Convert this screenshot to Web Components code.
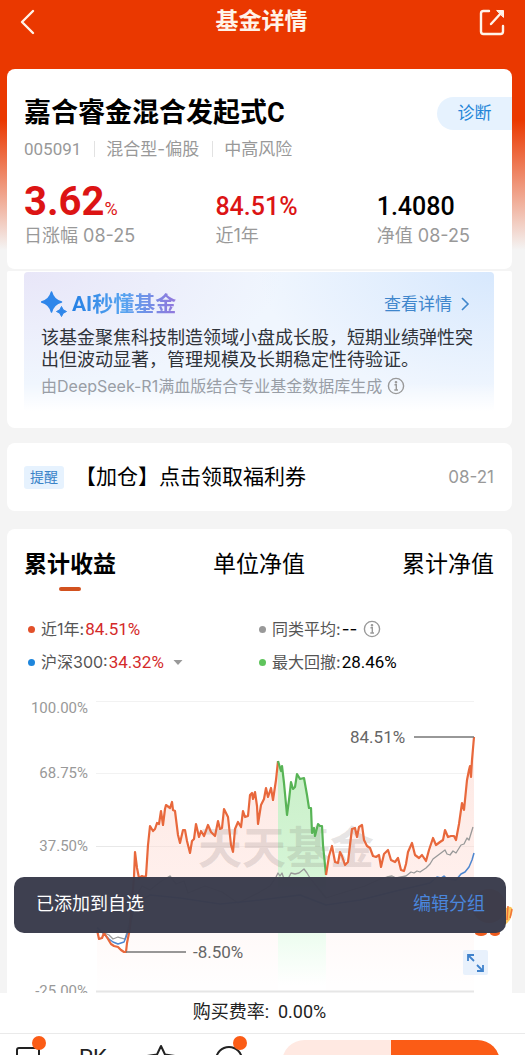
<!DOCTYPE html>
<html lang="zh-CN">
<head>
<meta charset="utf-8">
<meta name="viewport" content="width=device-width, initial-scale=1">
<title>基金详情</title>
<style>
  html, body { margin: 0; }
  body {
    --wide: Inter, "Noto Sans CJK SC", sans-serif;
    font-family: Roboto, "Noto Sans CJK SC", sans-serif;
    color: #000;
    background: #f4f4f4;
  }
</style>
</head>
<body>
<fund-app>
  <nav-bar slot="nav">基金详情</nav-bar>
  <fund-summary></fund-summary>
  <ai-brief></ai-brief>
  <notice-row date="08-21">【加仓】点击领取福利券</notice-row>
  <chart-card></chart-card>
  <snack-toast slot="toast" action="编辑分组">已添加到自选</snack-toast>
  <bottom-bar slot="footer"></bottom-bar>
</fund-app>

<script>
const reset = `<style>
  *, *::before, *::after { box-sizing: border-box; }
  :host { display: block; }
  button { font: inherit; color: inherit; background: none; border: 0; padding: 0; margin: 0; cursor: pointer; }
  a { color: inherit; text-decoration: none; }
  h1, h2, p, dl, dd, dt { margin: 0; font-weight: 400; }
  svg { display: block; }
</style>`;

function define(name, build) {
  customElements.define(name, class extends HTMLElement {
    constructor() {
      super();
      this.attachShadow({ mode: 'open' });
    }
    connectedCallback() {
      const t = document.createElement('template');
      t.innerHTML = reset + build(this);
      this.shadowRoot.replaceChildren(t.content.cloneNode(true));
    }
  });
}

define('fund-app', () => `
<style>
  :host {
    display: flex; flex-direction: column; position: relative;
    height: 100vh; overflow: hidden;
    background: linear-gradient(#ea3800 0, #ea3800 120px, #f4f4f4 250px);
  }
  main { flex: 1; min-height: 0; overflow: hidden; padding: 0 13px 0 7px; }
  .toast { position: absolute; left: 14px; right: 19px; bottom: 122px; }
</style>
<slot name="nav"></slot>
<main><slot></slot></main>
<slot name="footer"></slot>
<div class="toast"><slot name="toast"></slot></div>`);

define('nav-bar', () => `
<style>
  header { display: grid; grid-template-columns: 40px 1fr 40px; align-items: center; height: 69px; padding: 0 18px 25px 16px; color: #fff3e8; }
  h1 { text-align: center; font-size: 23px; line-height: 34px; font-weight: 700; }
  button { width: 30px; height: 30px; }
  button:last-child { justify-self: end; }
</style>
<header>
  <button aria-label="返回"><svg width="30" height="30" viewBox="0 0 30 30" fill="none" stroke="currentColor" stroke-width="2.4" stroke-linecap="round" stroke-linejoin="round"><path d="M17 4 6 15 17 26"/></svg></button>
  <h1><slot></slot></h1>
  <button aria-label="分享"><svg width="30" height="30" viewBox="0 0 30 30" fill="none" stroke="currentColor" stroke-width="2.4" stroke-linecap="round" stroke-linejoin="round"><path d="M12 4H6.500Q4 4 4 6.500V24.500Q4 27 6.500 27H23.500Q26 27 26 24.500V19"/><path d="M14 17 25 5"/><path d="M20 3.500H26.500V10Z" fill="currentColor" stroke-width="1"/></svg></button>
</header>`);

define('info-icon', () => `
<style>
  :host { display: inline-block; color: #999; }
</style>
<svg width="18" height="18" viewBox="0 0 18 18" fill="none" stroke="currentColor" stroke-width="1.4" role="img" aria-label="说明"><circle cx="9" cy="9" r="7.600"/><path d="M7.500 7.800H9.300V13M7.300 13H11"/><circle cx="9" cy="5.200" r=".6" fill="currentColor"/></svg>`);

define('fund-summary', () => `
<style>
  section { background: #fff; border-radius: 8px; padding: 24px 0 23px 17px; border-bottom: 1px solid #f4f4f4; }
  .head { display: flex; justify-content: space-between; align-items: center; }
  h2 { font-size: 27px; line-height: 40px; font-weight: 700; }
  .diag { width: 75px; height: 33px; border-radius: 17px 0 0 17px; background: #e6f2fe; color: #2385d8; font-size: 17px; line-height: 33px; }
  .meta { display: flex; align-items: center; margin-top: 4px; color: #999; font-size: 17px; line-height: 24px; }
  .meta span + span { position: relative; margin-left: 13px; padding-left: 12px; font-family: var(--wide); }
  .meta span + span::before { content: ""; position: absolute; left: 0; top: 4px; height: 16px; border-left: 1px solid #e2e2e2; }
  .stats { display: grid; grid-template-columns: 191fr 161fr 135fr; align-items: baseline; margin-top: 17px; }
  .v { font-size: 25px; line-height: 24px; font-weight: 500; }
  .big { font-size: 40px; line-height: 48px; font-weight: 700; }
  .big small { font-size: 18px; line-height: 18px; font-weight: 400; }
  .red { color: #dc1414; }
  .l { color: #999; font-family: var(--wide); font-size: 18px; line-height: 20px; }
</style>
<section>
  <div class="head"><h2>嘉合睿金混合发起式C</h2><button class="diag">诊断</button></div>
  <p class="meta"><span>005091</span><span>混合型-偏股</span><span>中高风险</span></p>
  <div class="stats">
    <div class="v big red">3.62<small>%</small></div><div class="v red">84.51%</div><div class="v">1.4080</div>
    <div class="l">日涨幅 08-25</div><div class="l">近1年</div><div class="l">净值 08-25</div>
  </div>
</section>`);

define('ai-brief', () => `
<style>
  section { background: #fff; border-radius: 2px 2px 8px 8px; padding: 1px 18px 17px 17px; margin-top: 1px; }
  .panel {
    border-radius: 4px; padding: 18px 17px 14px;
    background: linear-gradient(transparent 80%, #fff 100%),
      radial-gradient(ellipse 50% 90% at 100% 0, #d7e8fd, transparent),
      radial-gradient(ellipse 55% 80% at 0 0, #e8e6f8, transparent), #f0f6fe;
  }
  .head { display: flex; align-items: center; justify-content: space-between; }
  h2 { display: flex; align-items: center; gap: 5px; font-size: 21px; line-height: 28px; font-weight: 700; }
  h2 span { background: linear-gradient(90deg, #2580e4, #57a4f0 50%, #9277dc); -webkit-background-clip: text; background-clip: text; color: transparent; }
  a { display: flex; align-items: center; gap: 8px; margin-right: 7px; font-size: 17px; line-height: 24px; color: #3f86cc; }
  .text { margin-top: 9px; margin-right: -8px; font-size: 18px; line-height: 22px; color: #2f333a; }
  .src { display: flex; align-items: center; gap: 5px; margin-top: 4px; font: 16px/22px var(--wide); color: #999ea6; }
</style>
<section><div class="panel">
  <div class="head">
    <h2><svg width="26" height="26" viewBox="0 0 26 26" fill="#2f86ea"><path d="M10.500 1Q12.500 9 20.500 11Q12.500 13 10.500 21Q8.500 13 .500 11Q8.500 9 10.500 1Z" stroke="#2f86ea" stroke-width="1.500" stroke-linejoin="round"/><path d="M20.500 15.500Q21.500 19.500 25.500 20.500Q21.500 21.500 20.500 25.500Q19.500 21.500 15.500 20.500Q19.500 19.500 20.500 15.500Z" stroke="#2f86ea"/></svg><span>AI秒懂基金</span></h2>
    <a href="#detail">查看详情<svg width="10" height="14" viewBox="0 0 10 14" fill="none" stroke="currentColor" stroke-width="1.600"><path d="M2 1 8 7 2 13"/></svg></a>
  </div>
  <p class="text">该基金聚焦科技制造领域小盘成长股，短期业绩弹性突出但波动显著，管理规模及长期稳定性待验证。</p>
  <p class="src">由DeepSeek-R1满血版结合专业基金数据库生成<info-icon></info-icon></p>
</div></section>`);

define('notice-row', el => `
<style>
  section { display: flex; align-items: center; height: 68px; margin-top: 15px; padding: 0 18px 0 17px; background: #fff; border-radius: 8px; }
  .tag { padding: 0 6px; border-radius: 3px; background: #e6f2fe; color: #3a83c8; font-size: 14px; line-height: 23px; }
  .txt { flex: 1; margin-left: 11px; font-size: 21px; line-height: 30px; }
  time { color: #999; font-family: var(--wide); font-size: 17px; }
</style>
<section><span class="tag">提醒</span><span class="txt"><slot></slot></span><time>${el.getAttribute('date')}</time></section>`);

const rise = '97,930 99,939 102,938 104,933 108,939 111,944 114,946 118,947 121,950 124,952 126,952 127,943 130,928 132,900 134,877 135,852 137,868 139,878 142,876 144,877 146,876 148,845 150,826 153,831 155,829 157,823 159,824 161,811 163,825 165,809 166,805 170,808 172,802 173,810 175,811 178,835 180,843 183,830 185,830 187,841 190,853 192,841 194,839 196,824 199,837 201,831 204,836 208,825 211,832 215,836 218,821 220,829 222,828 224,809 228,817 231,845 233,852 235,829 238,822 241,827 243,811 245,817 248,816 250,795 252,793 253,799 255,792 257,806 258,824 261,805 264,799 266,788 268,797 271,788 273,800 276,780 278,761';
const fall = '278,761 281,771 282,766 284,783 287,815 289,800 291,782 293,789 295,787 297,774 300,779 304,778 307,795 309,808 311,808 312,833 314,828 315,836 317,828 318,824 320,826 322,826 323,845 326,875';
const rebound = '326,875 329,856 332,846 335,862 338,863 340,852 342,856 345,865 348,862 350,845 352,829 355,828 357,837 359,827 362,825 364,840 367,846 370,848 373,856 376,857 379,855 381,867 384,854 388,850 391,860 395,862 398,858 401,870 404,871 406,864 408,852 412,843 415,855 419,858 422,855 426,861 429,850 433,838 436,845 440,842 443,840 445,830 448,837 451,836 454,836 456,840 459,824 462,803 464,810 467,780 469,770 470,766 471,777 472,760 474,737';

define('chart-card', () => `
<style>
  section { margin-top: 18px; padding: 20px 18px 20px 17px; background: #fff; border-radius: 8px; }
  .tabs { display: flex; justify-content: space-between; }
  .tabs button { font-size: 23px; line-height: 32px; padding-bottom: 10px; position: relative; }
  .tabs [aria-selected=true] { font-weight: 700; }
  .tabs [aria-selected=true]::after { content: ""; position: absolute; left: 50%; bottom: 0; width: 22px; height: 4px; margin-left: -11px; border-radius: 2px; background: #d2521f; }
  .legend { display: grid; grid-template-columns: 1fr 1fr; row-gap: 9px; margin-top: 26px; padding: 0 4px; font-size: 16px; line-height: 24px; color: #555; }
  .legend div { display: flex; align-items: center; }
  .legend i { width: 7px; height: 7px; border-radius: 50%; background: var(--dot); margin-right: 6px; }
  dt { font-family: var(--wide); }
  dd { color: #000; font-size: 17px; margin-left: 1px; }
  dd.none { font-family: var(--wide); }
  dd.red { color: #d42a2a; }
  info-icon { margin-left: 6px; height: 18px; }
  .more { margin-left: 8px; width: 12px; height: 12px; }
  .plot { position: relative; margin-top: 22px; }
  .plot > svg { width: 100%; height: auto; }
  .axis { font-size: 15px; fill: #999; text-anchor: end; }
  .mark { font-size: 17px; fill: #666; }
  .expand { position: absolute; right: 6px; top: 254px; width: 25px; height: 25px; border-radius: 2px; background: #e8f1fc; }
</style>
<section>
  <div class="tabs" role="tablist">
    <button role="tab" aria-selected="true">累计收益</button><button role="tab" aria-selected="false">单位净值</button><button role="tab" aria-selected="false">累计净值</button>
  </div>
  <dl class="legend">
    <div><i style="--dot:#e2502a"></i><dt>近1年:</dt><dd class="red">84.51%</dd></div>
    <div><i style="--dot:#999"></i><dt>同类平均:</dt><dd class="none">--</dd><info-icon></info-icon></div>
    <div><i style="--dot:#1e86dc"></i><dt>沪深300:</dt><dd class="red">34.32%</dd><button class="more" aria-label="切换指数"><svg width="12" height="12" viewBox="0 0 12 12" fill="#999"><path d="M1.500 4H10.500L6 9Z"/></svg></button></div>
    <div><i style="--dot:#5fc45c"></i><dt>最大回撤:</dt><dd>28.46%</dd></div>
  </dl>
  <div class="plot">
    <svg viewBox="24 696 470 304">
      <defs>
        <linearGradient id="warm" gradientUnits="userSpaceOnUse" x1="0" y1="740" x2="0" y2="985"><stop offset="0" stop-color="#fde8e3"/><stop offset=".6" stop-color="#fff0ed"/><stop offset=".8" stop-color="#fffaf9"/><stop offset="1" stop-color="#fffefe"/></linearGradient>
        <linearGradient id="cool" gradientUnits="userSpaceOnUse" x1="0" y1="760" x2="0" y2="985"><stop offset="0" stop-color="#c9efc8"/><stop offset=".5" stop-color="#d5f5d6"/><stop offset=".8" stop-color="#effdf1"/><stop offset="1" stop-color="#fff"/></linearGradient>
      </defs>
      <path d="M96 701.500H474M96 773.500H474M96 846.500H474M96 918.500H474" stroke="#f2f2f2"/>
      <polygon fill="url(#warm)" points="97,990 ${rise} 278,990"/>
      <polygon fill="url(#cool)" points="278,990 ${fall} 326,990"/>
      <polygon fill="url(#warm)" points="326,990 ${rebound} 474,990"/>
      <path d="M96 846.500H474" stroke="#000" stroke-opacity=".04"/>
      <path d="M96 991.500H474" stroke="#e6e6e6" stroke-width="2"/>
      <text x="198" y="864" font-family="Noto Sans CJK SC" font-size="44" font-weight="700" fill="#6a5a5a" fill-opacity=".17">天天基金</text>
      <g fill="none" stroke-linejoin="round">
        <polyline stroke="#999" stroke-width="1.300" points="97,927 102,932 109,935 113,939 118,937 125,939 129,925 134,900 142,886 150,890 160,882 170,876 176,884 184,881 188,893 205,886 222,892 238,903 258,893 270,886 276,877 278,873 280,876 282,873 284,879 288,879 291,873 295,874 299,873 304,869 307,873 310,878 318,888 326,898 345,892 365,886 380,879 387,877 392,876 396,878 406,876 411,872 414,873 417,871 420,872 426,868 430,864 433,859 437,856 441,853 445,850 447,854 450,855 453,851 456,853 461,845 464,844 467,838 469,840 473,827"/>
        <polyline stroke="#4d86cf" stroke-width="1.500" points="97,928 104,934 109,939 113,942 118,944 124,942 129,930 135,904 150,895 180,898 220,904 260,900 300,895 326,905 360,900 400,890 430,883 437,877 441,878 444,876 447,879 456,880 461,874 465,872 469,867 472,860 474,853"/>
        <g stroke-width="2.200"><polyline stroke="#e8683c" points="${rise}"/><polyline stroke="#58b456" points="${fall}"/><polyline stroke="#e8683c" points="${rebound}"/></g>
        <path d="M414 737H474M126 952H186" stroke="#777" stroke-width="1.500"/>
      </g>
      <g class="axis"><text x="88" y="713">100.00%</text><text x="88" y="778">68.75%</text><text x="88" y="851">37.50%</text><text x="88" y="996">-25.00%</text></g>
      <g class="mark"><text x="350" y="743">84.51%</text><text x="193" y="958">-8.50%</text></g>
    </svg>
    <button class="expand" aria-label="全屏"><svg width="25" height="25" viewBox="0 0 25 25" fill="none" stroke="#3f82cc" stroke-width="1.800"><path d="M5 11V5H11M5 5 11 11M20 15V21H14M20 21 14 15"/></svg></button>
  </div>
</section>`);

define('snack-toast', el => `
<style>
  :host { position: relative; }
  .pal { position: absolute; right: -7px; top: 5px; }
  .bar { position: relative; display: flex; justify-content: space-between; align-items: center; height: 56px; padding: 0 21px 2px 22px; border-radius: 10px; background: rgba(57, 59, 76, .975); color: #fff; font-size: 18px; line-height: 26px; }
  button { color: #4a86dc; }
</style>
<svg class="pal" width="44" height="56" viewBox="0 0 44 56"><circle cx="20" cy="24" r="17" fill="#f0743a"/><path d="M37 26Q45 22 43 32Q41 41 34 44Z" fill="#ffc75c"/><path d="M39 24 38 38M43 27 41 36" stroke="#f0743a" stroke-width="1.500"/><ellipse cx="12" cy="51" rx="6" ry="3" fill="#ef5b1c"/><ellipse cx="26" cy="51" rx="5" ry="3" fill="#ef5b1c"/></svg>
<div class="bar" role="status"><span><slot></slot></span><button>${el.getAttribute('action')}</button></div>`);

define('bottom-bar', () => `
<style>
  :host { background: #fff; }
  .fee { height: 41px; border-bottom: 1px solid #eaeaea; text-align: center; font-size: 18px; line-height: 38px; color: #222; padding-right: 6px; }
  nav { display: flex; align-items: flex-start; height: 21px; overflow: hidden; padding: 0 25px 0 15px; color: #222; }
  .tools { flex: 1; display: flex; justify-content: space-between; align-items: flex-start; padding-right: 35px; }
  .tools svg { overflow: visible; }
  .pk { font-size: 22px; line-height: 26px; padding-top: 11px; }
  .buy { display: flex; width: 218px; height: 45px; margin-top: 6px; border-radius: 23px; overflow: hidden; }
  .buy button { flex: 1; background: #ffe9e2; }
  .buy button + button { background: #fb5c16; }
</style>
<div class="fee">购买费率:&nbsp; 0.00%</div>
<nav>
  <div class="tools">
    <button aria-label="消息"><svg width="26" height="50" viewBox="0 0 26 50" fill="none" stroke="currentColor" stroke-width="2"><path d="M2 40V16Q2 14 4 14H22Q24 14 24 16V40Z"/><circle cx="24" cy="9" r="7" fill="#fb5c16" stroke="none"/></svg></button>
    <button class="pk">PK</button>
    <button aria-label="自选"><svg width="32" height="50" viewBox="0 0 32 50" fill="none" stroke="currentColor" stroke-width="2" stroke-linejoin="round"><path d="M16 12 20 20.500 30 22 23 29 25 39 16 34 7 39 9 29 2 22 12 20.500Z"/></svg></button>
    <button aria-label="客服"><svg width="32" height="50" viewBox="0 0 32 50" fill="none" stroke="currentColor" stroke-width="2"><circle cx="14" cy="26" r="13"/><circle cx="25" cy="9" r="7" fill="#fb5c16" stroke="none"/></svg></button>
  </div>
  <div class="buy"><button aria-label="定投"></button><button aria-label="购买"></button></div>
</nav>`);
</script>
</body>
</html>
